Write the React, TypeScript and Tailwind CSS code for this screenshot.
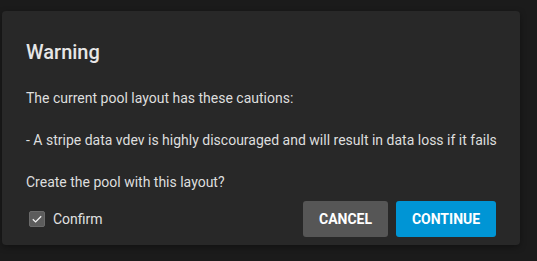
import { useState } from 'react';

const App = () => {
  const [confirmed, setConfirmed] = useState(true);

  return (
    <div
      className="w-[537px] h-[261px] overflow-hidden bg-[#1b1b1b] pt-[11px] pl-[2px]"
      style={{ fontFamily: 'Roboto, "Liberation Sans", sans-serif' }}
    >
      <div className="w-[518px] h-[234px] rounded-[4px] bg-[#282828] px-6 pt-[29px] shadow-[0_2px_6px_rgba(0,0,0,0.35)]">
        <h2 className="text-[20px] leading-[24px] font-medium text-[#e6e6e6]">Warning</h2>

        <p className="mt-6 -mr-4 text-[14px] leading-[21px] text-[#dedede] whitespace-pre">
          {'The current pool layout has these cautions:\n\n- A stripe data vdev is highly discouraged and will result in data loss if it fails\n\nCreate the pool with this layout?'}
        </p>

        {/* Actions */}
        <div className="mt-2 flex items-center justify-between">
          <label className="ml-[3px] flex items-center gap-2 cursor-pointer">
            <span
              onClick={() => setConfirmed(!confirmed)}
              className="flex h-[16px] w-[16px] items-center justify-center rounded-[2px] bg-[#5c5c5c] border border-[#6a6a6a]"
            >
              {confirmed && (
                <svg viewBox="0 0 16 16" className="h-[14px] w-[14px]">
                  <path d="M3.2 8.3 L6.4 11.3 L12.8 4.9" fill="none" stroke="#f2f2f2" strokeWidth="1.5" />
                </svg>
              )}
            </span>
            <span className="text-[14px] leading-[20px] text-[#e0e0e0]">Confirm</span>
          </label>

          <div className="flex gap-2">
            <button className="h-9 w-[85px] rounded-[3px] bg-[#565656] text-[14px] font-bold text-white">
              CANCEL
            </button>
            <button className="h-9 w-[100px] rounded-[3px] bg-[#0095d5] text-[14px] font-bold text-white">
              CONTINUE
            </button>
          </div>
        </div>
      </div>
    </div>
  );
};

export default App;
